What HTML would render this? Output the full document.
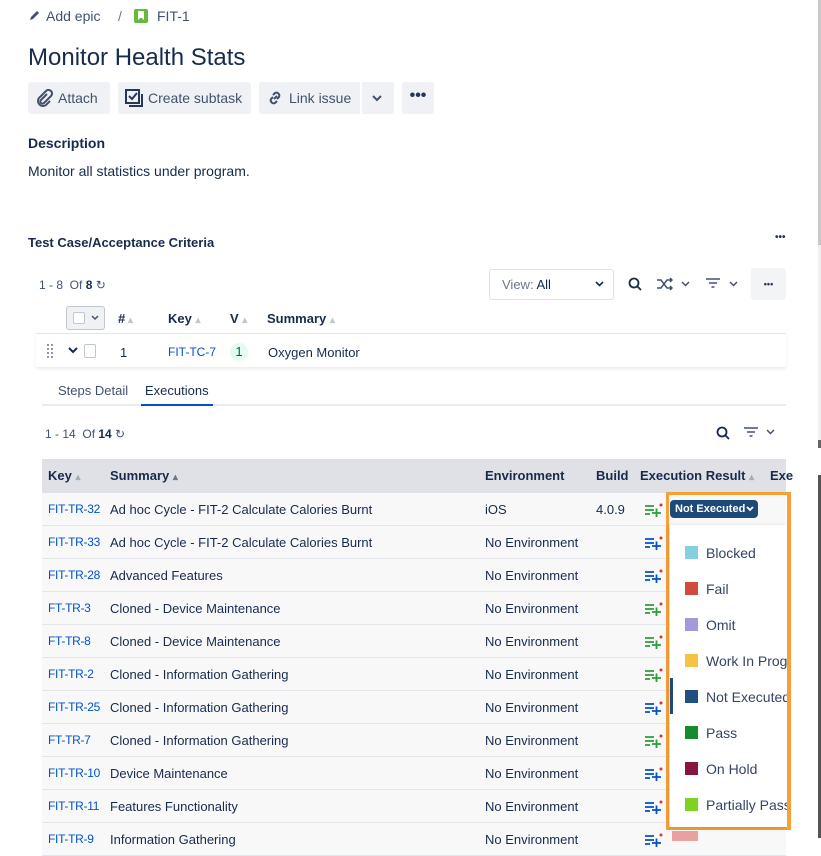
<!DOCTYPE html>
<html><head><meta charset="utf-8"><style>
*{box-sizing:border-box;margin:0;padding:0}
body{width:821px;height:838px;overflow:hidden;background:#fff;font-family:"Liberation Sans",sans-serif;color:#172b4d;font-size:13px;position:relative}
.a{position:absolute;white-space:nowrap}
.btn{position:absolute;top:82px;height:32px;background:#f0f1f4;border-radius:3px;font-size:14px;line-height:32px;color:#42526e}
.lnk{color:#0052cc}
.row{position:absolute;left:42px;width:744px;height:33px;background:#f8f8f8;border-bottom:1px solid #e3e5ea;font-size:13px;line-height:33px}
.row span{position:absolute}
.row span.lnk{font-size:12px;letter-spacing:-0.3px}
.ic{position:absolute;left:603px;top:10px}
.mi{position:absolute;left:685px;font-size:14px;color:#344563;line-height:16px}
.mi i{position:absolute;left:0;top:1px;width:13px;height:13px}
.mi b{font-weight:normal;position:absolute;left:21px;top:0}
</style></head><body>
<div class="a" style="left:818px;top:0;width:3px;height:245px;background:#c8c8c8"></div>
<div class="a" style="left:818px;top:245px;width:3px;height:195px;background:#f0f0f0"></div>
<div class="a" style="left:818px;top:440px;width:3px;height:8px;background:#666"></div>
<div class="a" style="left:818px;top:475px;width:3px;height:363px;background:#555"></div>

<svg class="a" style="left:29px;top:9px" width="12" height="12" viewBox="0 0 12 12"><path d="M1 11l1-3 6-6 2 2-6 6z" fill="#42526e"/></svg>
<div class="a" style="left:46px;top:8px;font-size:14px;color:#42526e">Add epic</div>
<div class="a" style="left:118px;top:8px;font-size:14px;color:#6b778c">/</div>
<div class="a" style="left:134px;top:9px;width:14px;height:14px;background:#63ba3c;border-radius:2px"></div>
<svg class="a" style="left:137px;top:11px" width="8" height="10"><path d="M1 0h6v9L4 6.5 1 9z" fill="#fff"/></svg>
<div class="a" style="left:157px;top:8px;font-size:14px;color:#42526e">FIT-1</div>

<div class="a" style="left:28px;top:44px;font-size:24px;color:#172b4d">Monitor Health Stats</div>

<div class="btn" style="left:28px;width:82px"><svg class="a" style="left:7px;top:7px" width="18" height="18" viewBox="0 0 18 18"><path d="M12 5l-6 6a2 2 0 003 3l7-7a3.5 3.5 0 00-5-5L4 9a5 5 0 007 7l4-4" fill="none" stroke="#42526e" stroke-width="2"/></svg><span class="a" style="left:30px">Attach</span></div>
<div class="btn" style="left:118px;width:133px"><svg class="a" style="left:6px;top:6px" width="20" height="20" viewBox="0 0 20 20"><rect x="2" y="2" width="13" height="13" fill="none" stroke="#253858" stroke-width="2"/><path d="M5 8l3 3 5-6" fill="none" stroke="#253858" stroke-width="2"/><path d="M5 18h13V6" fill="none" stroke="#253858" stroke-width="2"/></svg><span class="a" style="left:30px">Create subtask</span></div>
<div class="btn" style="left:259px;width:135px;"><svg class="a" style="left:7px;top:7px" width="18" height="18" viewBox="0 0 18 18"><path d="M8 10l3-3M7 6l2-2a3 3 0 014 4l-2 2M11 12l-2 2a3 3 0 01-4-4l2-2" fill="none" stroke="#42526e" stroke-width="2"/></svg><span class="a" style="left:30px">Link issue</span><div class="a" style="left:101px;top:0;width:2px;height:32px;background:#fff"></div><svg class="a" style="left:113px;top:12px" width="10" height="8"><path d="M1 2l4 4 4-4" fill="none" stroke="#42526e" stroke-width="2"/></svg></div>
<div class="btn" style="left:402px;width:32px;text-align:center;font-weight:bold;font-size:16px;line-height:28px;color:#253858">•••</div>

<div class="a" style="left:28px;top:135px;font-size:14px;font-weight:bold;color:#172b4d">Description</div>
<div class="a" style="left:28px;top:163px;font-size:14px;color:#172b4d">Monitor all statistics under program.</div>
<div class="a" style="left:28px;top:235px;font-size:13px;font-weight:bold">Test Case/Acceptance Criteria</div>
<div class="a" style="left:775px;top:232px;font-size:10px;font-weight:bold;color:#253858">•••</div>

<div class="a" style="left:39px;top:278px;font-size:12px;color:#42526e">1 - 8 &nbsp;Of <b style="color:#172b4d">8</b> ↻</div>
<div class="a" style="left:489px;top:269px;width:125px;height:31px;border:1px solid #dfe1e6;border-radius:3px;font-size:13px;line-height:29px;padding-left:12px;color:#6b778c">View: <span style="color:#172b4d">All</span><svg class="a" style="left:105px;top:11px" width="9" height="7"><path d="M1 1l3.5 3.5L8 1" fill="none" stroke="#172b4d" stroke-width="1.6"/></svg></div>
<svg class="a" style="left:628px;top:277px" width="14" height="14"><circle cx="6" cy="6" r="4.5" fill="none" stroke="#172b4d" stroke-width="1.8"/><path d="M9.5 9.5l3.5 3.5" stroke="#172b4d" stroke-width="1.8"/></svg>
<svg class="a" style="left:657px;top:277px" width="16" height="14" viewBox="0 0 16 14"><path d="M0 3h4l6 8h5M0 11h4l6-8h5M13 1l2 2-2 2M13 9l2 2-2 2" fill="none" stroke="#42526e" stroke-width="1.5"/></svg>
<svg class="a" style="left:681px;top:281px" width="9" height="6"><path d="M1 1l3.5 3.5L8 1" fill="none" stroke="#42526e" stroke-width="1.5"/></svg>
<svg class="a" style="left:706px;top:278px" width="14" height="11"><path d="M0 1h14M3 5h8M5.5 9h3" stroke="#42526e" stroke-width="1.6"/></svg>
<svg class="a" style="left:729px;top:281px" width="9" height="6"><path d="M1 1l3.5 3.5L8 1" fill="none" stroke="#42526e" stroke-width="1.5"/></svg>
<div class="a" style="left:751px;top:268px;width:35px;height:32px;background:#f3f4f6;border-radius:3px;text-align:center;font-size:9px;line-height:32px;font-weight:bold;color:#253858">•••</div>

<div class="a" style="left:66px;top:306px;width:39px;height:24px;border:1px solid #c1c7d0;border-radius:3px;background:#f0f1f4"></div>
<div class="a" style="left:73px;top:312px;width:12px;height:12px;border:1px solid #c1c7d0;background:#fff;border-radius:2px"></div>
<svg class="a" style="left:91px;top:315px" width="8" height="6"><path d="M1 1l3 3 3-3" fill="none" stroke="#42526e" stroke-width="1.5"/></svg>
<div class="a" style="left:118px;top:311px;font-weight:bold">#<span style="color:#c1c7d0;font-size:10px"> ▴</span></div>
<div class="a" style="left:168px;top:311px;font-weight:bold">Key <span style="color:#c1c7d0;font-size:10px">▴</span></div>
<div class="a" style="left:230px;top:311px;font-weight:bold">V <span style="color:#c1c7d0;font-size:10px">▴</span></div>
<div class="a" style="left:267px;top:311px;font-weight:bold">Summary <span style="color:#c1c7d0;font-size:10px">▴</span></div>
<div class="a" style="left:36px;top:333px;width:750px;height:34px;border-top:1px solid #e3e5ea;box-shadow:0 2px 3px rgba(0,0,0,.08)"></div>
<svg class="a" style="left:47px;top:344px" width="6" height="14"><g fill="#6b778c"><circle cx="1" cy="1" r="1"/><circle cx="5" cy="1" r="1"/><circle cx="1" cy="5" r="1"/><circle cx="5" cy="5" r="1"/><circle cx="1" cy="9" r="1"/><circle cx="5" cy="9" r="1"/><circle cx="1" cy="13" r="1"/><circle cx="5" cy="13" r="1"/></g></svg>
<svg class="a" style="left:68px;top:347px" width="10" height="7"><path d="M1 1l4 4 4-4" fill="none" stroke="#172b4d" stroke-width="2"/></svg>
<div class="a" style="left:84px;top:344px;width:12px;height:14px;border:1px solid #c1c7d0;border-radius:2px"></div>
<div class="a" style="left:120px;top:345px">1</div>
<div class="a lnk" style="left:168px;top:345px;font-size:12px">FIT-TC-7</div>
<div class="a" style="left:230px;top:343px;width:18px;height:18px;border-radius:9px;background:#e3fcef;text-align:center;line-height:18px;color:#006644">1</div>
<div class="a" style="left:268px;top:345px">Oxygen Monitor</div>

<div class="a" style="left:42px;top:404px;width:744px;height:2px;background:#ebecf0"></div>
<div class="a" style="left:58px;top:383px;color:#42526e">Steps Detail</div>
<div class="a" style="left:145px;top:383px;color:#172b4d">Executions</div>
<div class="a" style="left:141px;top:404px;width:72px;height:2px;background:#0052cc"></div>

<div class="a" style="left:45px;top:427px;font-size:12px;color:#42526e">1 - 14 &nbsp;Of <b style="color:#172b4d">14</b> ↻</div>
<svg class="a" style="left:716px;top:426px" width="14" height="14"><circle cx="6" cy="6" r="4.5" fill="none" stroke="#172b4d" stroke-width="1.8"/><path d="M9.5 9.5l3.5 3.5" stroke="#172b4d" stroke-width="1.8"/></svg>
<svg class="a" style="left:744px;top:427px" width="14" height="11"><path d="M0 1h14M3 5h8M5.5 9h3" stroke="#42526e" stroke-width="1.6"/></svg>
<svg class="a" style="left:766px;top:429px" width="9" height="6"><path d="M1 1l3.5 3.5L8 1" fill="none" stroke="#42526e" stroke-width="1.5"/></svg>

<div class="a" style="left:42px;top:459px;width:744px;height:34px;background:#dfe1e6;font-weight:bold;line-height:34px;font-size:13px">
<span class="a" style="left:6px">Key <span style="color:#a5adba;font-size:10px">▴</span></span>
<span class="a" style="left:68px">Summary <span style="color:#6b778c;font-size:10px">▴</span></span>
<span class="a" style="left:443px">Environment</span>
<span class="a" style="left:554px">Build</span>
<span class="a" style="left:598px">Execution Result <span style="color:#a5adba;font-size:10px">▴</span></span>
<span class="a" style="left:728px">Exe</span>
</div>

<div class="row" style="top:493px"><span class="lnk" style="left:6px">FIT-TR-32</span><span style="left:68px">Ad hoc Cycle - FIT-2 Calculate Calories Burnt</span><span style="left:443px">iOS</span><span style="left:554px">4.0.9</span><svg class="ic" width="18" height="14"><path d="M0 3h9M0 7h9M0 11h5M7 10h9M11.5 5.5v9" stroke="#2a9d3a" stroke-width="1.8"/><circle cx="16" cy="2" r="1.5" fill="#e03030"/></svg></div>
<div class="row" style="top:526px"><span class="lnk" style="left:6px">FIT-TR-33</span><span style="left:68px">Ad hoc Cycle - FIT-2 Calculate Calories Burnt</span><span style="left:443px">No Environment</span><svg class="ic" width="18" height="14"><path d="M0 3h9M0 7h9M0 11h5M7 10h9M11.5 5.5v9" stroke="#0052cc" stroke-width="1.8"/><circle cx="16" cy="2" r="1.5" fill="#e03030"/></svg></div>
<div class="row" style="top:559px"><span class="lnk" style="left:6px">FIT-TR-28</span><span style="left:68px">Advanced Features</span><span style="left:443px">No Environment</span><svg class="ic" width="18" height="14"><path d="M0 3h9M0 7h9M0 11h5M7 10h9M11.5 5.5v9" stroke="#0052cc" stroke-width="1.8"/><circle cx="16" cy="2" r="1.5" fill="#e03030"/></svg></div>
<div class="row" style="top:592px"><span class="lnk" style="left:6px">FT-TR-3</span><span style="left:68px">Cloned - Device Maintenance</span><span style="left:443px">No Environment</span><svg class="ic" width="18" height="14"><path d="M0 3h9M0 7h9M0 11h5M7 10h9M11.5 5.5v9" stroke="#2a9d3a" stroke-width="1.8"/><circle cx="16" cy="2" r="1.5" fill="#e03030"/></svg></div>
<div class="row" style="top:625px"><span class="lnk" style="left:6px">FT-TR-8</span><span style="left:68px">Cloned - Device Maintenance</span><span style="left:443px">No Environment</span><svg class="ic" width="18" height="14"><path d="M0 3h9M0 7h9M0 11h5M7 10h9M11.5 5.5v9" stroke="#2a9d3a" stroke-width="1.8"/><circle cx="16" cy="2" r="1.5" fill="#e03030"/></svg></div>
<div class="row" style="top:658px"><span class="lnk" style="left:6px">FIT-TR-2</span><span style="left:68px">Cloned - Information Gathering</span><span style="left:443px">No Environment</span><svg class="ic" width="18" height="14"><path d="M0 3h9M0 7h9M0 11h5M7 10h9M11.5 5.5v9" stroke="#2a9d3a" stroke-width="1.8"/><circle cx="16" cy="2" r="1.5" fill="#e03030"/></svg></div>
<div class="row" style="top:691px"><span class="lnk" style="left:6px">FIT-TR-25</span><span style="left:68px">Cloned - Information Gathering</span><span style="left:443px">No Environment</span><svg class="ic" width="18" height="14"><path d="M0 3h9M0 7h9M0 11h5M7 10h9M11.5 5.5v9" stroke="#0052cc" stroke-width="1.8"/><circle cx="16" cy="2" r="1.5" fill="#e03030"/></svg></div>
<div class="row" style="top:724px"><span class="lnk" style="left:6px">FT-TR-7</span><span style="left:68px">Cloned - Information Gathering</span><span style="left:443px">No Environment</span><svg class="ic" width="18" height="14"><path d="M0 3h9M0 7h9M0 11h5M7 10h9M11.5 5.5v9" stroke="#2a9d3a" stroke-width="1.8"/><circle cx="16" cy="2" r="1.5" fill="#e03030"/></svg></div>
<div class="row" style="top:757px"><span class="lnk" style="left:6px">FIT-TR-10</span><span style="left:68px">Device Maintenance</span><span style="left:443px">No Environment</span><svg class="ic" width="18" height="14"><path d="M0 3h9M0 7h9M0 11h5M7 10h9M11.5 5.5v9" stroke="#0052cc" stroke-width="1.8"/><circle cx="16" cy="2" r="1.5" fill="#e03030"/></svg></div>
<div class="row" style="top:790px"><span class="lnk" style="left:6px">FIT-TR-11</span><span style="left:68px">Features Functionality</span><span style="left:443px">No Environment</span><svg class="ic" width="18" height="14"><path d="M0 3h9M0 7h9M0 11h5M7 10h9M11.5 5.5v9" stroke="#0052cc" stroke-width="1.8"/><circle cx="16" cy="2" r="1.5" fill="#e03030"/></svg></div>
<div class="row" style="top:823px"><span class="lnk" style="left:6px">FIT-TR-9</span><span style="left:68px">Information Gathering</span><span style="left:443px">No Environment</span><svg class="ic" width="18" height="14"><path d="M0 3h9M0 7h9M0 11h5M7 10h9M11.5 5.5v9" stroke="#0052cc" stroke-width="1.8"/><circle cx="16" cy="2" r="1.5" fill="#e03030"/></svg><span style="left:630px;top:8px;width:26px;height:10px;background:#e8a0a0"></span></div>

<div class="a" style="left:666px;top:492px;width:125px;height:338px;border:3px solid #f7a035;background:transparent"></div>
<div class="a" style="left:670px;top:500px;width:88px;height:18px;background:#1e4a7a;border-radius:4px;color:#fff;font-size:11px;font-weight:bold;line-height:18px;padding-left:5px">Not Executed<svg class="a" style="left:76px;top:6px" width="8" height="6"><path d="M1 1l3 3 3-3" fill="none" stroke="#fff" stroke-width="1.8"/></svg></div>
<div class="a" style="left:670px;top:525px;width:117px;height:302px;background:#fff;box-shadow:-1px 1px 4px rgba(0,0,0,.15)"></div>
<div class="a" style="left:670px;top:678px;width:3px;height:36px;background:#1e4a7a"></div>
<div class="mi a" style="top:545px"><i style="background:#84d0e0"></i><b>Blocked</b></div>
<div class="mi a" style="top:581px"><i style="background:#d24a3c"></i><b>Fail</b></div>
<div class="mi a" style="top:617px"><i style="background:#a39ad9"></i><b>Omit</b></div>
<div class="mi a" style="top:653px"><i style="background:#f5c242"></i><b>Work In Prog</b></div>
<div class="mi a" style="top:689px"><i style="background:#214f82"></i><b>Not Executed</b></div>
<div class="mi a" style="top:725px"><i style="background:#178a2e"></i><b>Pass</b></div>
<div class="mi a" style="top:761px"><i style="background:#89143f"></i><b>On Hold</b></div>
<div class="mi a" style="top:797px"><i style="background:#7ed321"></i><b>Partially Pass</b></div>
<div class="a" style="left:787px;top:525px;width:30px;height:313px;background:#fff"></div>
<div class="a" style="left:787px;top:492px;width:4px;height:338px;background:#f7a035"></div>
</body></html>
